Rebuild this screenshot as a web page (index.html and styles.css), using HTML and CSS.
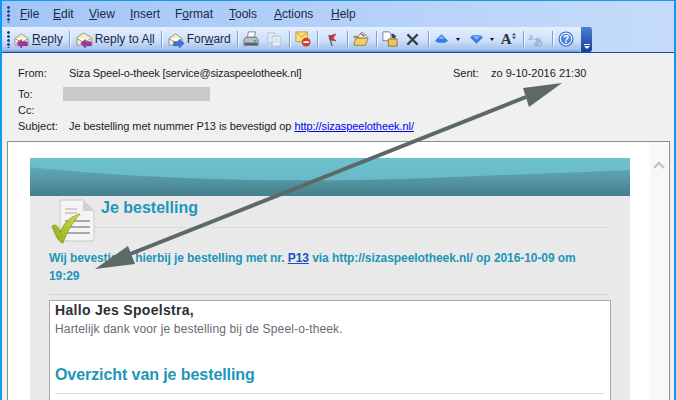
FILE: index.html
```html
<!DOCTYPE html>
<html lang="en">
  <head>
    <meta charset="UTF-8" />
    <title>Je bestelling - Message</title>
    <link rel="stylesheet" href="styles.css">
  </head>
  <body>
    <div class="window">
      <div class="menubar">
        <span class="grip"></span>
        <span class="menu w-file"><u>F</u>ile</span>
        <span class="menu w-edit"><u>E</u>dit</span>
        <span class="menu w-view"><u>V</u>iew</span>
        <span class="menu w-insert"><u>I</u>nsert</span>
        <span class="menu w-format">F<u>o</u>rmat</span>
        <span class="menu w-tools"><u>T</u>ools</span>
        <span class="menu w-actions"><u>A</u>ctions</span>
        <span class="menu"><u>H</u>elp</span>
      </div>

      <div class="toolrow">
        <div class="toolbar">
          <span class="grip"></span>
          <span class="tool first">
            <svg class="ico" viewBox="0 0 18 18">
              <path d="M2 8l7-5 7 5v7H2z" fill="#fbeeb4" stroke="#8a93a8"/>
              <path d="M2 8l7 4 7-4" fill="#fff" stroke="#8a93a8"/>
              <path d="M4 13l5-4v2.500h6v4H9V18z" fill="#a8389e" stroke="#6d1f78" stroke-width=".6"/>
            </svg>
            <span class="label"><u>R</u>eply</span>
          </span>
          <span class="sep"></span>
          <span class="tool">
            <svg class="ico" viewBox="0 0 18 18">
              <path d="M1 7l7-5 7 4 2 2v7H1z" fill="#fbeeb4" stroke="#8a93a8"/>
              <path d="M1 8l7 4 8-4" fill="#fff" stroke="#8a93a8"/>
              <path d="M5 13l5-4v2.500h6v4h-6V18z" fill="#a8389e" stroke="#6d1f78" stroke-width=".6"/>
            </svg>
            <span class="label">Reply to A<u>l</u>l</span>
          </span>
          <span class="sep"></span>
          <span class="tool">
            <svg class="ico" viewBox="0 0 18 18">
              <path d="M1 8l7-5 7 5v7H1z" fill="#fbeeb4" stroke="#8a93a8"/>
              <path d="M1 8l7 4 7-4" fill="#fff" stroke="#8a93a8"/>
              <path d="M17 13l-5-4v2.500H6v4h6V18z" fill="#3c78d8" stroke="#1f4f9e" stroke-width=".6"/>
            </svg>
            <span class="label">For<u>w</u>ard</span>
          </span>
          <span class="sep"></span>
          <svg class="ico" viewBox="0 0 18 18">
            <path d="M6 1h8l-1 6H5z" fill="#fff" stroke="#77808f"/>
            <path d="M3 7h12l2 3v6H1v-6z" fill="#b7c0cc" stroke="#667080"/>
            <path d="M2 13h14v3H2z" fill="#59636f"/>
            <path d="M12 10h3v2h-3z" fill="#37b24a"/>
          </svg>
          <svg class="ico copy-ico" viewBox="0 0 18 18">
            <path d="M2 2h8v11H2z" fill="#e6edf8" stroke="#aab6c8"/>
            <path d="M7 6h9v11H7z" fill="#f3f6fb" stroke="#aab6c8"/>
            <path d="M9 9h5M9 12h5" stroke="#b7c2d2"/>
          </svg>
          <span class="sep after-ico"></span>
          <svg class="ico" viewBox="0 0 18 18">
            <path d="M1 1h13v11H1z" fill="#f9dc7c" stroke="#c19a3a"/>
            <path d="M1 1l6.500 6L14 1" fill="none" stroke="#c19a3a"/>
            <circle cx="12.500" cy="12.500" r="5" fill="#d63a2a"/>
            <path d="M9.500 12.500h6" stroke="#fff" stroke-width="2"/>
          </svg>
          <span class="sep"></span>
          <svg class="flag" viewBox="0 0 12 14">
            <path d="M3 4l7-2-3 4 3 3-6-1z" fill="#d8322a" stroke="#99201c" stroke-width=".5"/>
            <path d="M3 3l3 11" stroke="#505a6a" stroke-width="1.200"/>
          </svg>
          <span class="sep wide"></span>
          <svg class="ico" viewBox="0 0 18 18">
            <path d="M1 6h6l1-2h4v3H1z" fill="#e5c765" stroke="#96782c"/>
            <path d="M6 6l4-5 6 5-2 2H6z" fill="#eef1f6" stroke="#7f8794"/>
            <path d="M9 3l4 3" stroke="#c0392b" stroke-width="1.500"/>
            <path d="M1 16l2-8h14l-3 8z" fill="#f0cf70" stroke="#96782c"/>
          </svg>
          <span class="sep after-ico"></span>
          <svg class="ico" viewBox="0 0 18 18">
            <path d="M1 1h7l2 2v8H1z" fill="#fff" stroke="#6b7482"/>
            <path d="M7 9h10v8H7z" fill="#eec55c" stroke="#8b6f24"/>
            <path d="M11 3h3v3h2l-3 3-3-3h1z" fill="#39414f" transform="rotate(-25 13 5)"/>
          </svg>
          <svg class="xmark" viewBox="0 0 14 14">
            <path d="M1.500 1.500l11 11M12.500 1.500l-11 11" stroke="#3b4048" stroke-width="2.400"/>
          </svg>
          <span class="sep wide"></span>
          <svg class="nav" viewBox="0 0 14 10">
            <path d="M7 0l7 7-3 2H3L0 7z" fill="#2f7fdc"/>
            <path d="M7 1l3 4H4z" fill="#7fb5f2"/>
          </svg>
          <span class="caret"></span>
          <svg class="nav second" viewBox="0 0 14 10">
            <path d="M7 10L0 3l3-2h8l3 2z" fill="#2f7fdc"/>
            <path d="M3 2h8L7 6z" fill="#7fb5f2"/>
          </svg>
          <span class="caret last"></span>
          <span class="font-size">A<svg class="updown" viewBox="0 0 6 9"><path d="M3 0l3 3.500H0zM3 9L0 5.500h6z" fill="#2b3f63"/></svg></span>
          <span class="sep after-ico"></span>
          <span class="encode"><span class="enc-a">a</span><span class="enc-j">あ</span></span>
          <span class="sep after-ico"></span>
          <svg class="ico" viewBox="0 0 16 16">
            <circle cx="8" cy="8" r="7.500" fill="#2a5fc4"/>
            <circle cx="8" cy="8" r="5.800" fill="#4d86e6" stroke="#fff" stroke-width="1.200"/>
            <text class="help-q" x="8" y="11.500" text-anchor="middle">?</text>
          </svg>
        </div>
        <div class="chevron"><span class="chev-line"></span><span class="chev-tri"></span></div>
      </div>

      <div class="content">
        <div class="head">
          <div class="head-row from-row">
            <span class="key">From:</span>
            <span class="from-val">Siza Speel-o-theek [service@sizaspeelotheek.nl]</span>
            <span class="sent-key">Sent:</span>
            <span>zo 9-10-2016 21:30</span>
          </div>
          <div class="head-row to-row">
            <span class="key">To:</span>
            <span class="redacted"></span>
          </div>
          <div class="head-row"><span class="key">Cc:</span></div>
          <div class="head-row">
            <span class="key">Subject:</span>
            <span class="subject-val">Je bestelling met nummer P13 is bevestigd op <a class="mail-link" href="#">http://sizaspeelotheek.nl/</a></span>
          </div>
        </div>

        <div class="viewer">
          <div class="page">
            <div class="mail">
              <svg class="banner" viewBox="0 0 600 38" preserveAspectRatio="none">
                <defs>
                  <linearGradient id="bannerTop" x1="0" y1="0" x2="0" y2="1">
                    <stop offset="0" stop-color="#6dc2d0"/>
                    <stop offset="1" stop-color="#64b3c2"/>
                  </linearGradient>
                  <linearGradient id="bannerLow" x1="0" y1="0" x2="0" y2="1">
                    <stop offset="0" stop-color="#62a8b6"/>
                    <stop offset="1" stop-color="#457f8d"/>
                  </linearGradient>
                  <linearGradient id="checkFill" x1="1" y1="0" x2="0" y2="1">
                    <stop offset="0" stop-color="#d9dc4a"/>
                    <stop offset="1" stop-color="#8fa81c"/>
                  </linearGradient>
                </defs>
                <rect width="600" height="38" fill="url(#bannerTop)"/>
                <path d="M0 9C100 20 250 26 400 20S560 14 600 12V38H0z" fill="url(#bannerLow)"/>
              </svg>
              <div class="mail-body">
                <div class="title-row">
                  <svg class="doc-icon" viewBox="0 0 46 46">
                    <path d="M11 1h21l11 11v28a2 2 0 0 1-2 2H11a2 2 0 0 1-2-2V3a2 2 0 0 1 2-2z" fill="#f4f4f4" stroke="#c8c8c8"/>
                    <path d="M32 1l11 11H32z" fill="#c9d2da"/>
                    <path d="M14 10h12M14 14h12" stroke="#d0d0d0" stroke-width="2"/>
                    <path d="M14 22h25M14 28h25M14 34h25" stroke="#a9a9a9" stroke-width="2"/>
                    <path d="M1 27c3-2 6-1 8 6C14 22 21 17 29 15 21 24 16 33 12 44 8 44 4 36 1 27z" fill="url(#checkFill)" stroke="#7d9216" stroke-width=".7"/>
                  </svg>
                  <h1 class="title">Je bestelling</h1>
                </div>
                <p class="intro">Wij bevestigen hierbij je bestelling met nr. <a class="order-link" href="#">P13</a> via http://sizaspeelotheek.nl/ op 2016-10-09 om 19:29</p>
                <div class="order-box">
                  <p class="hello">Hallo Jes Spoelstra,</p>
                  <p class="thanks">Hartelijk dank voor je bestelling bij de Speel-o-theek.</p>
                  <h2 class="overview">Overzicht van je bestelling</h2>
                </div>
              </div>
            </div>
            <div class="scrollbar"><svg class="scroll-up" viewBox="0 0 12 8"><path d="M1 7l5-5 5 5" fill="none" stroke="#c4c4c4" stroke-width="2.400"/></svg></div>
          </div>
        </div>
      </div>

      <svg class="arrow" viewBox="0 0 676 400">
        <path d="M526 97L125 256" stroke="#5d6967" stroke-width="4"/>
        <path d="M562 83L523 88 529 107z" fill="#5d6967"/>
        <path d="M95 269L128 246 135 264z" fill="#5d6967"/>
      </svg>
    </div>
  </body>
</html>
```

FILE: styles.css
```css
* {
  box-sizing: border-box;
}
html,
body {
  margin: 0;
  padding: 0;
}
body {
  font-family: "Liberation Sans", Arial, sans-serif;
  font-size: 12px;
  color: #1c1c1c;
  background-color: #f0f0f0;
}
p,
h1,
h2 {
  margin: 0;
}
.window {
  position: relative;
  display: flex;
  flex-direction: column;
  width: 676px;
  height: 400px;
  overflow: hidden;
  border-top: 1px solid #0f9bf0;
  border-left: 2px solid #0f9bf0;
  border-right: 2px solid #0f9bf0;
}
.grip {
  display: block;
  flex: none;
  width: 3px;
  height: 17px;
  margin-left: 5px;
  background-image: radial-gradient(circle at 1.500px 1.500px, #27467e 1.300px, transparent 1.500px);
  background-size: 3px 4px;
}
.menubar {
  display: flex;
  align-items: center;
  height: 26px;
  background: linear-gradient(to right, #a3c5f8, #c5dbf9);
}
.menubar .grip {
  margin-right: 10px;
}
.menu {
  color: #1b2a3f;
}
.w-file { width: 33px; }
.w-edit { width: 36px; }
.w-view { width: 41px; }
.w-insert { width: 45px; }
.w-format { width: 54px; }
.w-tools { width: 45px; }
.w-actions { width: 57px; }

.toolrow {
  display: flex;
  height: 26px;
  border-bottom: 1px solid #0d4ea5;
  background: linear-gradient(to right, #a3c5f8, #c5dbf9);
}
.toolbar {
  display: flex;
  align-items: center;
  width: 579px;
  height: 25px;
  padding-bottom: 1px;
  border-radius: 0 3px 3px 3px;
  background: linear-gradient(to bottom, #e6f0fe, #cddffa 55%, #a6c1ec 90%, #6c8fcf);
}
.tool {
  display: flex;
  flex: none;
  align-items: center;
  gap: 2px;
  margin-left: 1px;
}
.tool.first {
  margin-left: 3px;
}
.tool .ico {
  width: 17px;
  height: 17px;
}
.label {
  color: #1b2a3f;
  white-space: nowrap;
}
.ico {
  display: block;
  flex: none;
  width: 16px;
  height: 16px;
}
.copy-ico {
  margin-left: 7px;
  opacity: 0.8;
}
.sep {
  flex: none;
  width: 1px;
  height: 16px;
  margin: 0 5px 0 6px;
  background-color: #7f9fd0;
  box-shadow: 1px 0 0 #f4f8ff;
}
.sep.after-ico {
  margin-left: 7px;
}
.sep.wide {
  margin-left: 9px;
}
.flag {
  display: block;
  flex: none;
  width: 12px;
  height: 14px;
  margin-left: 3px;
}
.xmark {
  display: block;
  flex: none;
  width: 13px;
  height: 13px;
  margin-left: 8px;
}
.nav {
  display: block;
  flex: none;
  width: 13px;
  height: 10px;
  margin-left: 1px;
}
.nav.second {
  margin-left: 10px;
}
.caret {
  flex: none;
  width: 0;
  height: 0;
  margin-left: 8px;
  border-left: 2.500px solid transparent;
  border-right: 2.500px solid transparent;
  border-top: 3px solid #111;
}
.caret.last {
  margin-left: 7px;
}
.font-size {
  display: flex;
  flex: none;
  align-items: flex-start;
  margin-left: 7px;
  font-family: "Liberation Serif", serif;
  font-size: 15px;
  font-weight: bold;
  line-height: 17px;
  color: #2c3138;
}
.updown {
  display: block;
  width: 4px;
  height: 8px;
  margin-top: 1px;
}
.encode {
  display: flex;
  flex: none;
  align-items: flex-start;
  width: 16px;
  height: 17px;
  color: #8fa0b8;
  font-family: "Liberation Serif", serif;
  font-size: 10px;
  line-height: 11px;
}
.enc-j {
  margin-top: 5px;
  font-family: "Noto Sans CJK JP", sans-serif;
  font-size: 10px;
}
.help-q {
  font-family: "Liberation Sans", Arial, sans-serif;
  font-size: 10px;
  font-weight: bold;
  fill: #fff;
}
.chevron {
  display: flex;
  flex: none;
  flex-direction: column;
  align-items: center;
  justify-content: flex-end;
  gap: 1px;
  width: 11px;
  height: 25px;
  padding-bottom: 3px;
  border-radius: 0 3px 3px 0;
  background: linear-gradient(to bottom, #4b7fd4, #123f97);
}
.chev-line {
  width: 6px;
  height: 1px;
  background-color: #fff;
}
.chev-tri {
  width: 0;
  height: 0;
  border-left: 3px solid transparent;
  border-right: 3px solid transparent;
  border-top: 3px solid #fff;
}

.content {
  flex: 1;
  min-height: 0;
  padding: 0 4px 0 5px;
  background-color: #f0f0f0;
}
.head {
  height: 88px;
  padding: 12px 0 0 11px;
  font-size: 11px;
}
.head-row {
  display: flex;
  align-items: center;
  height: 16px;
  color: #1c1c1c;
}
.from-row {
  height: 16px;
  margin-bottom: 5px;
}
.key {
  flex: none;
  width: 51px;
}
.from-val {
  flex: none;
  width: 384px;
  white-space: nowrap;
  letter-spacing: -0.13px;
}
.subject-val {
  flex: none;
  white-space: nowrap;
  letter-spacing: -0.06px;
}
.sent-key {
  flex: none;
  width: 38px;
}
.redacted {
  flex: none;
  width: 147px;
  height: 14px;
  margin-left: -6px;
  background-color: #c9c9c9;
}
.mail-link {
  color: #0000ee;
}

.viewer {
  height: 300px;
  border: 1px solid #8b8b93;
  border-bottom: 0;
  background-color: #fff;
}
.page {
  display: flex;
  height: 100%;
  padding-top: 16px;
}
.mail {
  flex: none;
  width: 600px;
  margin-left: 22px;
  background-color: #e9e9e9;
}
.banner {
  display: block;
  width: 600px;
  height: 38px;
}
.mail-body {
  padding: 0 22px 0 19px;
}
.title-row {
  position: relative;
  height: 32px;
  margin-bottom: 21px;
  padding: 2px 0 0 52px;
  border-bottom: 1px solid #dcdcdc;
}
.doc-icon {
  position: absolute;
  left: 2px;
  top: 3px;
  width: 46px;
  height: 46px;
}
.title {
  font-size: 16px;
  line-height: 20px;
  font-weight: bold;
  color: #1d96b8;
}
.intro {
  padding-bottom: 9px;
  border-bottom: 1px solid #d6d6d6;
  font-size: 12px;
  font-weight: bold;
  line-height: 18px;
  letter-spacing: -0.07px;
  color: #1d96b8;
}
.order-link {
  color: #1553c4;
}
.order-box {
  width: 562px;
  height: 100px;
  margin-top: 5px;
  padding: 0 6px 0 5px;
  border: 1px solid #a8a8a8;
  border-bottom: 0;
  background-color: #fff;
}
.hello {
  font-size: 14px;
  font-weight: bold;
  line-height: 18px;
  letter-spacing: 0.3px;
  color: #2e2e36;
}
.thanks {
  margin-top: 1px;
  font-size: 12px;
  line-height: 18px;
  letter-spacing: 0.15px;
  color: #666a72;
}
.overview {
  margin-top: 26px;
  padding-bottom: 8px;
  border-bottom: 1px solid #d8d8d8;
  font-size: 16px;
  font-weight: bold;
  line-height: 21px;
  letter-spacing: -0.08px;
  color: #1d96b8;
}
.scrollbar {
  flex: none;
  width: 18px;
  margin-left: 20px;
  margin-top: -16px;
  padding-top: 19px;
  background-color: #f8f8f8;
}
.scroll-up {
  display: block;
  width: 12px;
  height: 8px;
  margin-left: 3px;
}
.arrow {
  position: absolute;
  left: -2px;
  top: -1px;
  width: 676px;
  height: 400px;
  pointer-events: none;
}
```
